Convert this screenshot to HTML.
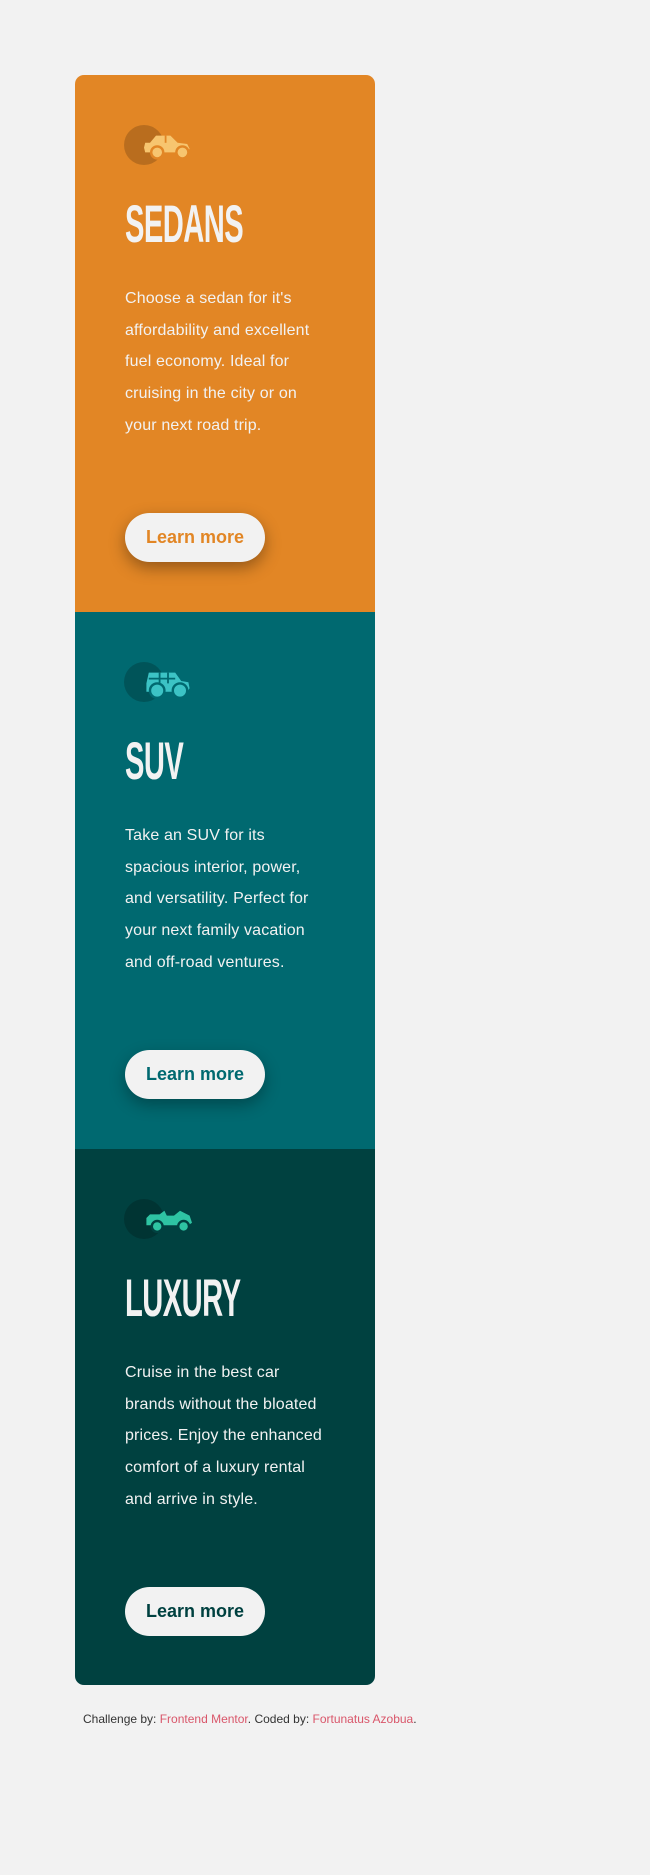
<!DOCTYPE html>
<html><head><meta charset="utf-8"><style>
*{margin:0;padding:0;box-sizing:border-box}
body{width:650px;height:1875px;background:#f2f2f2;font-family:"Liberation Sans",sans-serif;position:relative;overflow:hidden}
.card{position:absolute;left:75px;top:75px;width:300px;height:1610px;border-radius:9px;overflow:hidden}
.sec{position:absolute;left:0;width:300px;height:537px}
.s1{top:0;background:#e28625}.s2{top:537px;background:#006970}.s3{top:1074px;background:#004140}
.ic{position:absolute;left:49px;top:50px}
h2{position:absolute;left:50px;top:119px;font-family:"Liberation Sans Narrow","Liberation Sans",sans-serif;font-weight:700;font-size:53px;line-height:62px;color:#f2f2f2;transform:scaleX(.55);transform-origin:left;letter-spacing:-1px;white-space:nowrap}
p{position:absolute;left:50px;top:208px;font-size:16px;line-height:31.7px;color:#f2f2f2;letter-spacing:.15px;white-space:nowrap}
.btn{position:absolute;left:50px;top:438px;width:140px;height:49px;border-radius:25px;background:#f2f2f2;font-weight:700;font-size:18px;text-align:center;line-height:49px}
.s1 .btn{color:#e28625;box-shadow:0 6px 16px rgba(0,0,0,.35)}
.s2 .btn{color:#006970;box-shadow:0 6px 16px rgba(0,0,0,.3)}
.s3 .btn{color:#004140}
.foot{position:absolute;left:83px;top:1712px;font-size:12px;color:#333}
.foot span{color:#d9566a}
</style></head><body>
<div class="card">
<div class="sec s1">
<svg class="ic" width="90" height="44" viewBox="0 0 90 44"><circle cx="20" cy="20" r="20" fill="rgba(0,0,0,.18)"/>
<g transform="translate(-4,-5) scale(1.2)"><path d="M21 19h4l5-6h12l6 6 8 1 2 4-2 3H21l-1-4z" fill="#f7c56f"/><circle cx="31" cy="27" r="5" fill="#f7c56f" stroke="#e28625" stroke-width="2"/><circle cx="52" cy="27" r="5" fill="#f7c56f" stroke="#e28625" stroke-width="2"/><path d="M38 13v6" stroke="#e28625" stroke-width="1.5"/></g></svg>
<h2>SEDANS</h2>
<p>Choose a sedan for it's<br>affordability and excellent<br>fuel economy. Ideal for<br>cruising in the city or on<br>your next road trip.</p>
<div class="btn">Learn more</div>
</div>
<div class="sec s2">
<svg class="ic" width="90" height="44" viewBox="0 0 90 44"><circle cx="20" cy="20" r="20" fill="rgba(0,0,0,.2)"/>
<g transform="translate(-4,-5) scale(1.2)"><path d="M22 22l2-9h22l5 7 6 1 1 5-2 3H22z" fill="#3cc3c5"/><circle cx="31" cy="28" r="6" fill="#3cc3c5" stroke="#006970" stroke-width="2"/><circle cx="50" cy="28" r="6" fill="#3cc3c5" stroke="#006970" stroke-width="2"/><path d="M33 13v9M40 13v9M24 18h22" stroke="#006970" stroke-width="1.5"/></g></svg>
<h2>SUV</h2>
<p>Take an SUV for its<br>spacious interior, power,<br>and versatility. Perfect for<br>your next family vacation<br>and off-road ventures.</p>
<div class="btn">Learn more</div>
</div>
<div class="sec s3">
<svg class="ic" width="90" height="44" viewBox="0 0 90 44"><circle cx="20" cy="20" r="20" fill="rgba(0,0,0,.2)"/>
<g transform="translate(-4,-5) scale(1.2)"><path d="M22 20l3-3h8l4-3 2 4h6l5-4 8 4 2 6-3 2H22z" fill="#2ec4a3"/><circle cx="31" cy="27" r="4.5" fill="#2ec4a3" stroke="#004140" stroke-width="2"/><circle cx="53" cy="27" r="4.5" fill="#2ec4a3" stroke="#004140" stroke-width="2"/></g></svg>
<h2>LUXURY</h2>
<p>Cruise in the best car<br>brands without the bloated<br>prices. Enjoy the enhanced<br>comfort of a luxury rental<br>and arrive in style.</p>
<div class="btn">Learn more</div>
</div>
</div>
<div class="foot">Challenge by: <span>Frontend Mentor</span>. Coded by: <span>Fortunatus Azobua</span>.</div>
</body></html>
